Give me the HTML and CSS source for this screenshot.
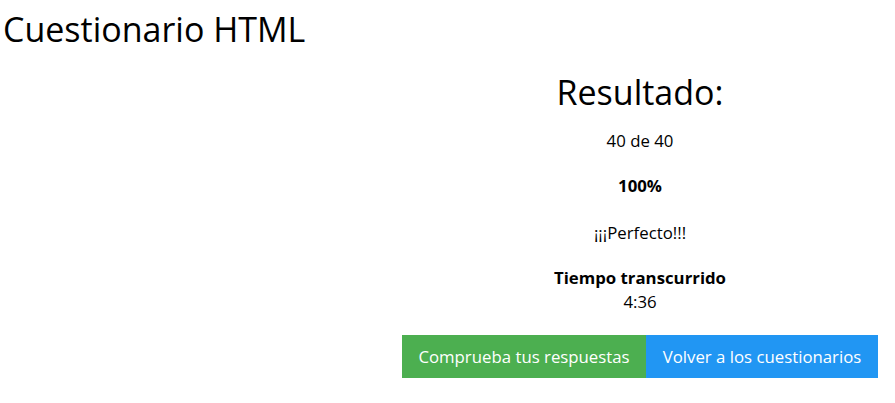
FILE: index.html
```html
<!DOCTYPE html>
<html lang="es">
<head>
<meta charset="utf-8">
<title>Cuestionario HTML</title>
<link rel="stylesheet" href="styles.css">
</head>
<body>
<h1 class="page-title">Cuestionario HTML</h1>
<main class="layout">
  <div class="left-col"></div>
  <section class="result">
    <h2 class="result-heading">Resultado:</h2>
    <p class="line score">40 de 40</p>
    <p class="line percent">100%</p>
    <p class="line message">¡¡¡Perfecto!!!</p>
    <div class="time">
      <div class="time-label">Tiempo transcurrido</div>
      <div class="time-value">4:36</div>
    </div>
    <div class="actions">
      <button class="btn btn-green">Comprueba tus respuestas</button>
      <button class="btn btn-blue">Volver a los cuestionarios</button>
    </div>
  </section>
</main>
</body>
</html>
```

FILE: styles.css
```css
* { box-sizing: border-box; }
html, body {
  margin: 0;
  padding: 0;
  background: #fff;
}
body {
  font-family: "Open Sans", "Noto Sans", sans-serif;
  font-size: 16.8px;
  color: #000;
  padding-right: 17px;
}
.page-title {
  margin: 0;
  padding: 7px 0 0 3px;
  font-size: 34px;
  font-weight: 400;
  line-height: 44px;
  color: #000;
}
.layout {
  display: flex;
}
.left-col {
  flex: 1;
}
.result {
  width: 476px;
  text-align: center;
  display: flex;
  flex-direction: column;
}
.result-heading {
  margin: 19px 0 0;
  font-size: 34px;
  font-weight: 400;
  line-height: 44px;
}
.line {
  margin: 0;
  line-height: 22px;
}
.score { margin-top: 16px; }
.percent { margin-top: 23px; font-weight: 700; }
.message { margin-top: 25px; }
.time { margin-top: 22px; }
.time-label { font-weight: 700; line-height: 23px; }
.time-value { line-height: 26px; }
.actions {
  display: flex;
  margin-top: 20px;
}
.btn {
  border: 0;
  margin: 0;
  font-family: inherit;
  font-size: 16.8px;
  color: #fff;
  height: 43px;
  padding: 0 12px;
  cursor: pointer;
  white-space: nowrap;
}
.btn-green { background: #4caf50; flex: 0 0 244px; }
.btn-blue { background: #2196f3; flex: 1; }
```
